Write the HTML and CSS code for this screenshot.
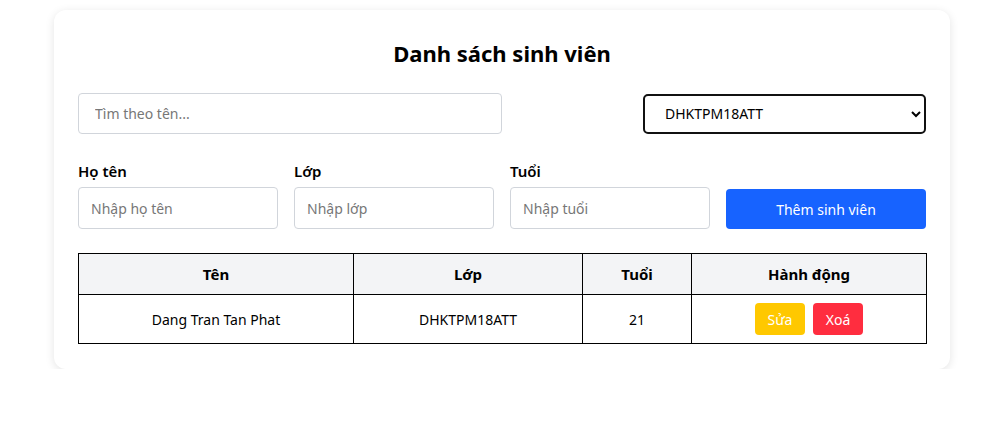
FILE: index.html
```html
<!DOCTYPE html>
<html lang="vi">
<head>
<meta charset="utf-8">
<link rel="stylesheet" href="styles.css">
</head>
<body>
<div class="card">
  <h2 class="title">Danh sách sinh viên</h2>
  <div class="toolbar">
    <input class="search" type="text" placeholder="Tìm theo tên...">
    <select class="filter">
      <option>DHKTPM18ATT</option>
    </select>
  </div>
  <div class="form">
    <div class="field">
      <label>Họ tên</label>
      <input type="text" placeholder="Nhập họ tên">
    </div>
    <div class="field">
      <label>Lớp</label>
      <input type="text" placeholder="Nhập lớp">
    </div>
    <div class="field">
      <label>Tuổi</label>
      <input type="text" placeholder="Nhập tuổi">
    </div>
    <div class="field">
      <button class="add">Thêm sinh viên</button>
    </div>
  </div>
  <table class="list">
    <colgroup><col class="c1"><col class="c2"><col class="c3"><col class="c4"></colgroup>
    <thead>
      <tr><th>Tên</th><th>Lớp</th><th>Tuổi</th><th>Hành động</th></tr>
    </thead>
    <tbody>
      <tr>
        <td>Dang Tran Tan Phat</td>
        <td>DHKTPM18ATT</td>
        <td>21</td>
        <td><div class="actions"><button class="btn edit">Sửa</button><button class="btn del">Xoá</button></div></td>
      </tr>
    </tbody>
  </table>
</div>
</body>
</html>
```

FILE: styles.css
```css
html, body { margin: 0; padding: 0; background: #fff; }
body { font-family: "Noto Sans", "Open Sans", sans-serif; color: #000; }
.card {
  width: 896px;
  box-sizing: border-box;
  margin: 10px 0 0 54px;
  padding: 27px 24px 25px;
  background: #fff;
  border-radius: 12px;
  box-shadow: 0 2px 10px rgba(0,0,0,0.11);
}
.title {
  margin: 0;
  text-align: center;
  font-size: 22px;
  font-weight: 700;
  line-height: 32px;
}
.toolbar {
  display: flex;
  justify-content: space-between;
  align-items: center;
  margin-top: 24px;
}
input {
  font-family: inherit;
  font-size: 14px;
  box-sizing: border-box;
  height: 42px;
  border: 1px solid #d1d5db;
  border-radius: 4px;
  padding: 0 12px;
  color: #222;
  outline: none;
}
input::placeholder { color: #777; }
.search { width: 424px; height: 41px; padding-left: 16px; }
.filter {
  width: 283px;
  height: 40px;
  box-sizing: border-box;
  border: 2px solid #111;
  border-radius: 5px;
  padding: 0 16px;
  font-family: inherit;
  font-size: 14px;
  background: #fff;
  color: #000;
}
.form {
  display: grid;
  grid-template-columns: repeat(4, 200px);
  column-gap: 16px;
  margin-top: 27px;
  align-items: end;
}
.field { display: flex; flex-direction: column; }
.field label {
  font-size: 15px;
  font-weight: 600;
  line-height: 20px;
  margin-bottom: 6px;
}
.field input { width: 200px; padding-left: 12px; }
.add {
  height: 40px;
  border: none;
  border-radius: 4px;
  background: #1763ff;
  color: #fff;
  font-family: inherit;
  font-size: 14px;
}
.list {
  width: 848px;
  margin-top: 24px;
  border-collapse: collapse;
  table-layout: fixed;
  font-size: 14px;
}
.list th, .list td { border: 1px solid #000; text-align: center; padding: 0; }
.list th { background: #f3f4f6; height: 40px; font-weight: 700; font-size: 15px; }
.list td { height: 48px; }
.c1 { width: 275px; }
.c2 { width: 229px; }
.c3 { width: 109px; }
.c4 { width: 235px; }
.actions { display: flex; justify-content: center; gap: 8px; }
.btn {
  width: 50px;
  height: 32px;
  border: none;
  border-radius: 4px;
  color: #fff;
  font-family: inherit;
  font-size: 14px;
}
.edit { background: #ffc800; }
.del { background: #ff2d3f; }
```
